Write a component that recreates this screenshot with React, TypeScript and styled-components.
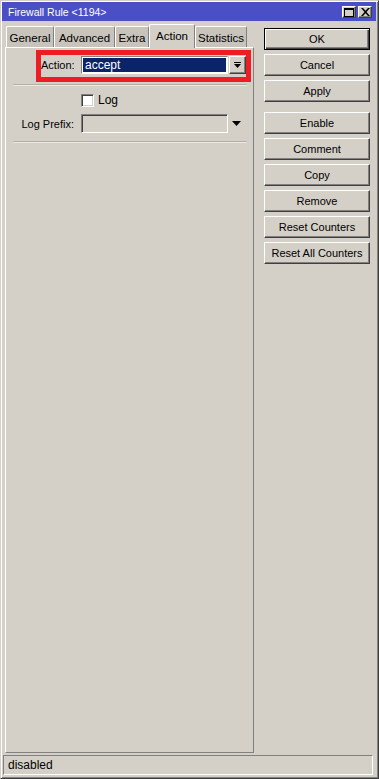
import React from 'react';
import styled, { createGlobalStyle, css } from 'styled-components';

const GlobalStyle = createGlobalStyle`
  html, body {
    margin: 0;
    padding: 0;
    background: #d4d0c8;
  }
  body {
    font-family: "Liberation Sans", Arial, sans-serif;
    font-size: 11px;
    color: #000;
  }
`;

const raised = css`
  border-top: 1px solid #fff;
  border-left: 1px solid #fff;
  border-right: 1px solid #404040;
  border-bottom: 1px solid #404040;
  box-shadow: inset -1px -1px 0 #808080;
`;

const sunken = css`
  border-top: 1px solid #808080;
  border-left: 1px solid #808080;
  border-right: 1px solid #fff;
  border-bottom: 1px solid #fff;
  box-shadow: inset 1px 1px 0 #404040, inset -1px -1px 0 #d4d0c8;
`;

const tabs = [
  { name: 'General', width: 48 },
  { name: 'Advanced', width: 61 },
  { name: 'Extra', width: 34 },
  { name: 'Action', width: 46 },
  { name: 'Statistics', width: 52 },
];

const buttonGroups = [
  ['OK', 'Cancel', 'Apply'],
  ['Enable', 'Comment', 'Copy', 'Remove', 'Reset Counters', 'Reset All Counters'],
];

const App: React.FC = () => {
  return (
    <>
      <GlobalStyle />
      <Window>
        <TitleBar>
          <Title>Firewall Rule &lt;1194&gt;</Title>
          <TitleButtons>
            <TitleButton>
              <svg width="10" height="9" viewBox="0 0 10 9">
                <rect x="0.5" y="0.5" width="9" height="8" fill="none" stroke="#000" />
                <rect x="0" y="0" width="10" height="2" fill="#000" />
              </svg>
            </TitleButton>
            <TitleButton>
              <svg width="9" height="8" viewBox="0 0 9 8">
                <path d="M0 0h2l2.5 2.8L7 0h2L5.5 4 9 8H7L4.5 5.2 2 8H0l3.5-4z" fill="#000" />
              </svg>
            </TitleButton>
          </TitleButtons>
        </TitleBar>

        <Body>
          <LeftColumn>
            <TabRow>
              {tabs.map(t => (
                <Tab key={t.name} $active={t.name === 'Action'} $width={t.width}>
                  {t.name}
                </Tab>
              ))}
            </TabRow>
            <Panel>
              <Highlight>
                <FieldRow $label={40}>
                  <Label>Action:</Label>
                  <SelectBox>accept</SelectBox>
                  <DropButton>
                    <svg width="7" height="7" viewBox="0 0 7 7">
                      <rect x="0" y="0" width="7" height="1" fill="#000" />
                      <path d="M0 2h7L3.5 6z" fill="#000" />
                    </svg>
                  </DropButton>
                </FieldRow>
              </Highlight>
              <Separator />
              <CheckRow>
                <CheckBox />
                <span>Log</span>
              </CheckRow>
              <FieldRow $label={75} $top={7}>
                <Label>Log Prefix:</Label>
                <TextInput />
                <ArrowWrap>
                  <svg width="9" height="5" viewBox="0 0 9 5">
                    <path d="M0 0h9L4.5 5z" fill="#000" />
                  </svg>
                </ArrowWrap>
              </FieldRow>
              <Separator $top={8} />
            </Panel>
          </LeftColumn>

          <ButtonColumn>
            {buttonGroups.map((group, gi) => (
              <ButtonGroup key={gi}>
                {group.map(b => (
                  <Button key={b} $default={b === 'OK'}>
                    {b}
                  </Button>
                ))}
              </ButtonGroup>
            ))}
          </ButtonColumn>
        </Body>

        <StatusBar>disabled</StatusBar>
      </Window>
    </>
  );
};

export default App;

const Window = styled.div`
  width: 379px;
  height: 779px;
  box-sizing: border-box;
  display: flex;
  flex-direction: column;
  border-top: 1px solid #d4d0c8;
  border-left: 1px solid #d4d0c8;
  border-right: 1px solid #404040;
  border-bottom: 1px solid #404040;
  box-shadow: inset 1px 1px 0 #fff, inset -1px -1px 0 #808080;
  padding: 1px 2px 3px 1px;
  background: #d4d0c8;
`;

const TitleBar = styled.div`
  height: 19px;
  background: #4b4fc7;
  display: flex;
  align-items: center;
  justify-content: space-between;
  padding: 0 4px 0 6px;
  flex-shrink: 0;
`;

const Title = styled.span`
  color: #fff;
  font-size: 10.5px;
  margin-top: 1px;
`;

const TitleButtons = styled.div`
  display: flex;
  gap: 2px;
  margin-top: 1px;
`;

const TitleButton = styled.div`
  width: 14px;
  height: 12px;
  box-sizing: border-box;
  background: #d4d0c8;
  ${raised};
  display: flex;
  align-items: center;
  justify-content: center;
`;

const Body = styled.div`
  flex: 1;
  display: flex;
  padding: 3px 6px 0 3px;
  min-height: 0;
`;

const LeftColumn = styled.div`
  width: 249px;
  display: flex;
  flex-direction: column;
`;

const TabRow = styled.div`
  display: flex;
  align-items: flex-end;
  height: 23px;
  padding-left: 1px;
`;

const Tab = styled.div<{ $active?: boolean; $width: number }>`
  box-sizing: border-box;
  width: ${p => p.$width}px;
  height: 21px;
  display: flex;
  align-items: center;
  justify-content: center;
  font-size: 11.5px;
  white-space: nowrap;
  background: ${p => (p.$active ? '#d4d0c8' : '#c8c4bc')};
  border-top: 1px solid #fff;
  border-left: 1px solid #fff;
  border-right: 1px solid #808080;
  border-radius: 2px 2px 0 0;
  ${p =>
    p.$active
      ? css`
          margin-bottom: -1px;
          height: 24px;
          padding-bottom: 2px;
          position: relative;
          z-index: 1;
        `
      : css`
          padding-top: 1px;
        `}
`;

const Panel = styled.div`
  flex: 1;
  border-top: 1px solid #fff;
  border-left: 1px solid #fff;
  border-right: 1px solid #808080;
  border-bottom: 1px solid #808080;
  display: flex;
  flex-direction: column;
`;

const Highlight = styled.div`
  margin: 2px 2px 0 30px;
  border: 5px solid #ee1c24;
  padding-top: 1px;
  height: 21px;
  box-sizing: content-box;
`;

const FieldRow = styled.div<{ $label: number; $top?: number }>`
  display: grid;
  grid-template-columns: ${p => p.$label}px 147px 18px;
  align-items: center;
  margin-top: ${p => p.$top ?? 0}px;
`;

const Label = styled.span`
  text-align: right;
  padding-right: 7px;
  font-size: 11px;
  white-space: nowrap;
`;

const SelectBox = styled.div`
  height: 18px;
  box-sizing: border-box;
  background: #0a246a;
  color: #fff;
  font-size: 12px;
  padding-left: 3px;
  display: flex;
  align-items: center;
  border-top: 1px solid #808080;
  border-left: 1px solid #808080;
  border-right: 1px solid #fff;
  border-bottom: 1px solid #fff;
  box-shadow: inset 0 0 0 1px #fff;
`;

const DropButton = styled.div`
  height: 18px;
  margin-left: 1px;
  box-sizing: border-box;
  background: #d4d0c8;
  ${raised};
  display: flex;
  align-items: center;
  justify-content: center;
`;

const Separator = styled.div<{ $top?: number }>`
  height: 1px;
  margin: ${p => p.$top ?? 2}px 6px 0 7px;
  background: #b4b0a8;
  border-bottom: 1px solid #ebe9e4;
`;

const CheckRow = styled.div`
  display: flex;
  align-items: center;
  gap: 4px;
  margin: 7px 0 0 75px;
  font-size: 12px;
  height: 14px;
`;

const CheckBox = styled.div`
  width: 13px;
  height: 13px;
  box-sizing: border-box;
  background: #fff;
  ${sunken};
`;

const TextInput = styled.div`
  height: 19px;
  box-sizing: border-box;
  background: #d4d0c8;
  ${sunken};
`;

const ArrowWrap = styled.div`
  display: flex;
  align-items: center;
  padding-left: 4px;
`;

const ButtonColumn = styled.div`
  margin-left: 10px;
  width: 106px;
  display: flex;
  flex-direction: column;
  gap: 10px;
  padding-top: 4px;
`;

const ButtonGroup = styled.div`
  display: flex;
  flex-direction: column;
  gap: 4px;
`;

const Button = styled.div<{ $default?: boolean }>`
  height: 22px;
  box-sizing: border-box;
  background: #d4d0c8;
  display: flex;
  align-items: center;
  justify-content: center;
  font-size: 11px;
  white-space: nowrap;
  ${p =>
    p.$default
      ? css`
          border: 1px solid #000;
          box-shadow: inset 1px 1px 0 #fff, inset -1px -1px 0 #404040, inset -2px -2px 0 #808080;
        `
      : raised}
`;

const StatusBar = styled.div`
  margin: 2px 3px 0 1px;
  height: 20px;
  box-sizing: border-box;
  border-top: 1px solid #808080;
  border-left: 1px solid #808080;
  border-right: 1px solid #fff;
  border-bottom: 1px solid #fff;
  display: flex;
  align-items: center;
  padding-left: 4px;
  font-size: 12px;
  flex-shrink: 0;
`;
